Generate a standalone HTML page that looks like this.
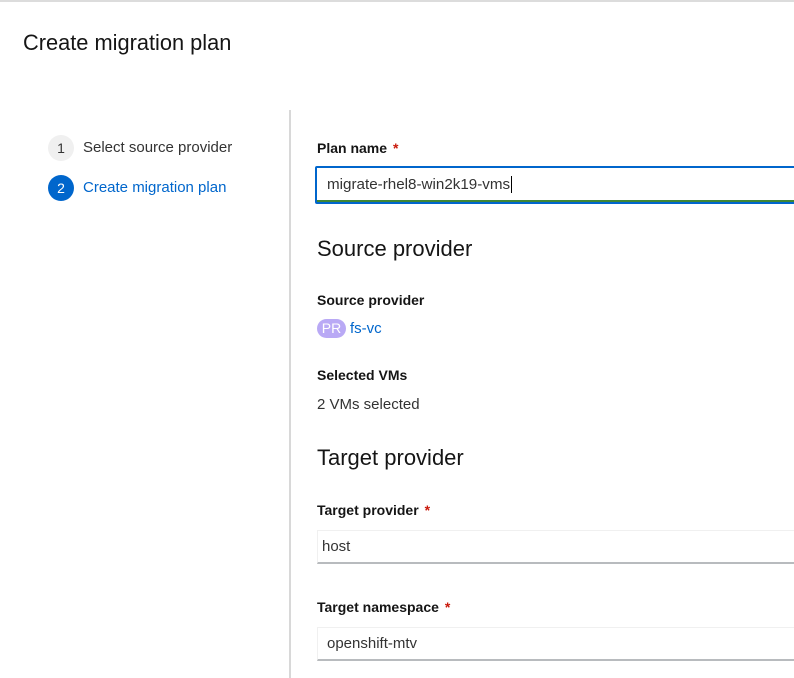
<!DOCTYPE html>
<html><head><style>
body{margin:0;width:794px;height:678px;background:#fff;font-family:"Liberation Sans",sans-serif;position:relative;overflow:hidden;color:#151515}
.a{position:absolute;white-space:nowrap}
.lbl{font-size:14px;font-weight:bold;color:#151515}
.req{color:#c9190b;margin-left:6px}
.h{font-size:22px;color:#151515}
.circ{position:absolute;width:26px;height:26px;border-radius:50%;font-size:14px;text-align:center;line-height:26px}
.inp{position:absolute;left:317px;width:500px;height:34px;border:1px solid #f0f0f0;border-bottom:2px solid #b8bbbe;box-sizing:border-box;font-size:15px;line-height:32px}
</style></head><body>
<div class="a" style="left:0;top:0;width:794px;height:2px;background:#dcdcdc"></div>
<div class="a" style="left:23px;top:30px;font-size:21.8px">Create migration plan</div>
<div class="circ" style="left:48px;top:135px;background:#f0f0f0;color:#333">1</div>
<div class="a" style="left:83px;top:139px;font-size:15px;color:#333">Select source provider</div>
<div class="circ" style="left:48px;top:175px;background:#0066cc;color:#fff">2</div>
<div class="a" style="left:83px;top:179px;font-size:15px;color:#0066cc">Create migration plan</div>
<div class="a" style="left:289px;top:110px;width:2px;height:568px;background:#d8d8d8"></div>
<div class="a lbl" style="left:317px;top:140px">Plan name<span class="req">*</span></div>
<div class="a" style="left:315px;top:166px;width:520px;height:38px;border:2px solid #0066cc;box-sizing:border-box;border-radius:2px"></div>
<div class="a" style="left:317px;top:200px;width:480px;height:2px;background:#3e8635"></div>
<div class="a" style="left:327px;top:176px;font-size:15.2px;color:#333">migrate-rhel8-win2k19-vms<span style="border-left:1px solid #000;margin-left:1px"></span></div>
<div class="a h" style="left:317px;top:236px">Source provider</div>
<div class="a lbl" style="left:317px;top:292px">Source provider</div>
<div class="a" style="left:317px;top:319px;width:29px;height:19px;border-radius:10px;background:#b9a9f5;color:#fff;font-size:14px;text-align:center;line-height:19px">PR</div>
<div class="a" style="left:350px;top:320px;font-size:15px;color:#0066cc">fs-vc</div>
<div class="a lbl" style="left:317px;top:367px">Selected VMs</div>
<div class="a" style="left:317px;top:396px;font-size:15px;color:#333">2 VMs selected</div>
<div class="a h" style="left:317px;top:445px">Target provider</div>
<div class="a lbl" style="left:317px;top:502px">Target provider<span class="req">*</span></div>
<div class="inp" style="top:530px;padding-left:4px;color:#333">host</div>
<div class="a lbl" style="left:317px;top:599px">Target namespace<span class="req">*</span></div>
<div class="inp" style="top:627px;padding-left:9px;color:#333">openshift-mtv</div>
</body></html>
